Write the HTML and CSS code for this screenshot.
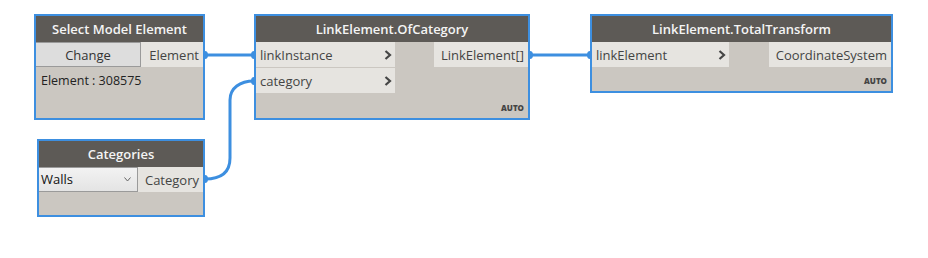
FILE: index.html
```html
<!DOCTYPE html>
<html>
    <head>
        <title>Dynamo graph</title>
        <meta charset="utf-8">
        <link rel="stylesheet" href="styles.css">
    </head>
    <body>
      <div class="canvas">
            <svg class="wires" width="928" height="258" viewBox="0 0 928 258">
                <path d="M205,55 L254,55"/>
                <path d="M530,55 L590,55"/>
                <path d="M205,179 C222,179 230,172 230,158 L230,100 C230,88 240,81 254,81"/>
                <g class="nub">
                    <ellipse cx="205" cy="55" rx="3" ry="4"/>
                    <ellipse cx="254" cy="55" rx="3" ry="4"/>
                    <ellipse cx="254" cy="81" rx="3" ry="4"/>
                    <ellipse cx="530" cy="55" rx="3" ry="4"/>
                    <ellipse cx="590" cy="55" rx="3" ry="4"/>
                    <ellipse cx="205" cy="179" rx="3" ry="4"/>
                </g>
            </svg>

            <!-- Select Model Element -->
            <div class="node node-select">
                  <div class="node-head">Select Model Element</div>
                  <div class="node-row">
                        <div class="btn">Change</div>
                        <div class="port-out grow">Element</div>
                  </div>
                  <div class="node-info">Element : 308575</div>
            </div>

            <!-- LinkElement.OfCategory -->
            <div class="node node-ofcat">
                  <div class="node-head">LinkElement.OfCategory</div>
                  <div class="node-ports">
                        <div class="inputs">
                              <div class="port-in"><span>linkInstance</span><svg class="chev" width="8" height="10" viewBox="0 0 8 10"><path d="M1.5,1 L6,5 L1.5,9"/></svg></div>
                              <div class="port-in"><span>category</span><svg class="chev" width="8" height="10" viewBox="0 0 8 10"><path d="M1.5,1 L6,5 L1.5,9"/></svg></div>
                        </div>
                        <div class="outputs">
                              <div class="port-out">LinkElement[]</div>
                        </div>
                  </div>
                  <div class="node-foot">AUTO</div>
            </div>

            <!-- LinkElement.TotalTransform -->
            <div class="node node-transform">
                  <div class="node-head">LinkElement.TotalTransform</div>
                  <div class="node-ports">
                        <div class="inputs">
                              <div class="port-in"><span>linkElement</span><svg class="chev" width="8" height="10" viewBox="0 0 8 10"><path d="M1.5,1 L6,5 L1.5,9"/></svg></div>
                        </div>
                        <div class="outputs">
                              <div class="port-out">CoordinateSystem</div>
                        </div>
                  </div>
                  <div class="node-foot">AUTO</div>
            </div>

            <!-- Categories -->
            <div class="node node-cats">
                  <div class="node-head">Categories</div>
                  <div class="node-row">
                        <div class="dropdown"><span>Walls</span><svg class="caret" width="7" height="5" viewBox="0 0 7 5"><path d="M0.5,0.5 L3.5,4 L6.5,0.5"/></svg></div>
                        <div class="port-out grow">Category</div>
                  </div>
            </div>
      </div>
    </body>
</html>
```

FILE: styles.css
```css
body{
      margin: 0;
      background: #ffffff;
      font-family: "Open Sans", "Noto Sans", sans-serif;
      color: #333;
}
.canvas{
      position: relative;
      width: 928px;
      height: 258px;
      overflow: hidden;
}
.wires{position: absolute; left: 0; top: 0;}
.wires path{fill: none; stroke: #3d8fe0; stroke-width: 3;}
.wires .nub ellipse{fill: #3d8fe0;}

.node{
      position: absolute;
      box-sizing: border-box;
      border: 2px solid #3d8fe0;
      background: #cbc7c1;
      display: flex;
      flex-direction: column;
}
.node-select{left: 34px; top: 14px; width: 171px; height: 106px;}
.node-ofcat{left: 254px; top: 14px; width: 276px; height: 106px;}
.node-transform{left: 590px; top: 14px; width: 303px; height: 79px;}
.node-cats{left: 37px; top: 139px; width: 168px; height: 78px;}

.node-head{
      height: 26px;
      line-height: 26px;
      background: #5d5a56;
      color: #f4f4f4;
      font-weight: 600;
      font-size: 13px;
      text-align: center;
      white-space: nowrap;
}
.node-row{display: flex; height: 25px;}
.btn{
      box-sizing: border-box;
      width: 105px;
      border: 1px solid #9a9a9a;
      border-left: none;
      background: #dddddd;
      font-size: 13px;
      line-height: 24px;
      text-align: center;
}
.grow{flex: 1;}
.port-out{
      box-sizing: border-box;
      height: 25px;
      background: #e6e4e0;
      font-size: 13px;
      line-height: 24px;
      padding: 1px 4px 0 0;
      text-align: right;
      color: #444;
      white-space: nowrap;
}
.node-info{font-size: 12.5px; padding: 5px 0 0 5px; color: #222;}

.node-ports{display: flex; justify-content: space-between;}
.inputs{display: flex; flex-direction: column; gap: 1px;}
.node-ofcat .inputs{width: 139px;}
.node-ofcat .outputs .port-out{width: 94px;}
.node-transform .inputs{width: 137px;}
.node-transform .outputs .port-out{width: 122px;}
.port-in{
      box-sizing: border-box;
      display: flex;
      justify-content: space-between;
      align-items: center;
      height: 25px;
      background: #e6e4e0;
      font-size: 13px;
      line-height: 24px;
      padding: 1px 3px 0 4px;
      color: #444;
}
.chev path{fill: none; stroke: #454545; stroke-width: 2.2;}
.node-foot{
      flex: 1;
      display: flex;
      align-items: flex-end;
      justify-content: flex-end;
      padding: 0 4px 5px 0;
      font-size: 8px;
      font-weight: 800;
      color: #444;
}

.dropdown{
      box-sizing: border-box;
      width: 99px;
      display: flex;
      justify-content: space-between;
      align-items: center;
      border: 1px solid #9a9a9a;
      border-left: none;
      background: linear-gradient(#f2f2f2, #e4e4e4);
      font-size: 13px;
      line-height: 23px;
      padding: 0 6px 0 2px;
      color: #111;
}
.caret path{fill: none; stroke: #666; stroke-width: 1;}
```
